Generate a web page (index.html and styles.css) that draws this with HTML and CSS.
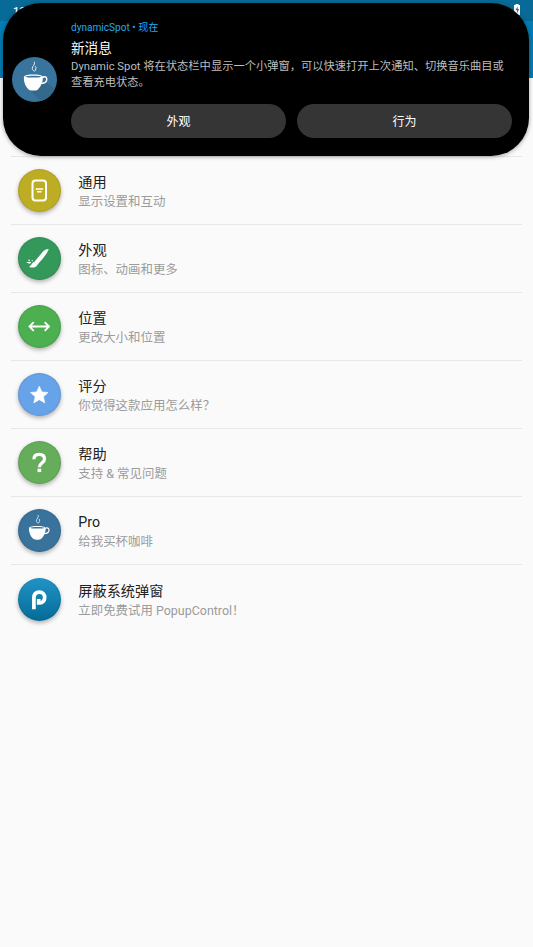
FILE: index.html
```html
<!DOCTYPE html>
<html lang="zh-CN">
<head>
<meta charset="utf-8">
<title>dynamicSpot</title>
<link rel="stylesheet" href="styles.css">
</head>
<body>
<svg class="defs" aria-hidden="true">
  <symbol id="cup" viewBox="0 0 44 44" preserveAspectRatio="none">
    <path fill="currentColor" fill-rule="evenodd" d="M10.700 19.200C11.500 17.500 16 17 21 17s9.700.6 10.300 2.100c2.300-1 5-.2 5.100 2.500.1 3-2.500 5-6.500 4.900-1.100 2.700-3.200 4.500-4.200 5.400-2.200 1.200-7.200 1.200-9.400 0-3.300-2.300-5.800-6.500-5.600-12.700zM12.200 19.300c1.200 1.100 16.200 1.100 17.600 0-1.300-1.300-16.300-1.300-17.600 0zM31.400 20.600c0 1.600-.3 3-.8 4.400 2.500.1 4.300-1.200 4.300-3.200 0-1.700-2-2.200-3.500-1.200z"/>
    <path fill="none" stroke="currentColor" stroke-width=".9" stroke-linecap="round" d="M22.200 5c1 2.800-2.200 3.900-2.400 6-.1 1.300 1 2 1.900 2.700M23.600 9.500c1 1.700-.1 2.800-.9 4.200"/>
  </symbol>
</svg>
<header class="appbar">
  <div class="statusbar">
    <span>10:00</span>
    <svg class="battery" viewBox="0 0 8 11"><path fill="#fff" d="M2.500 0h3v1H7v10H1V1h1.500z"/><path fill="#086a96" d="M4.700 2.500 2.600 6h1.500v3l2-3.700H4.700z"/></svg>
  </div>
</header>

<section class="popup">
  <svg class="avatar" viewBox="0 0 44 44">
    <circle cx="22" cy="22" r="22" fill="#38749b"/>
    <path fill="#34698c" d="M33 24 42 31.200A22 22 0 0 1 28.500 43L17 32z"/>
    <use href="#cup" x="2" y="0" width="39.500" height="44"/>
  </svg>
  <div class="message">
    <div class="source">dynamicSpot • 现在</div>
    <div class="heading">新消息</div>
    <div class="body">Dynamic Spot 将在状态栏中显示一个小弹窗，可以快速打开上次通知、切换音乐曲目或<br>查看充电状态。</div>
    <div class="actions"><div class="action">外观</div><div class="action">行为</div></div>
  </div>
</section>

<main class="list">
  <div class="row">
    <div class="icon general"><svg viewBox="0 0 43 43"><rect x="14.500" y="11.500" width="13.500" height="20" rx="3" fill="none" stroke="#fff" stroke-width="2"/><path stroke="#fff" stroke-width="1.500" d="M17.700 20h7.400M19 22.800h4.500"/></svg></div>
    <div class="text"><div class="title">通用</div><div class="sub">显示设置和互动</div></div>
  </div>
  <div class="row">
    <div class="icon looks"><svg viewBox="0 0 43 43"><path fill="#fff" d="M30.700 12.200c-1.600-.4-4.200.8-5.700 2.300L16 25.300l3.300 2.600c4-4.700 9.300-10 11.400-15.700z"/><path fill="#fff" d="m15.700 25 3.800 2.700c-1.200 2.300-2.800 2.800-5.600 2.800-1.700 0-2.700-.5-2.500-1.300 1.800-.1 2.200-2.900 4.300-4.200z"/><path fill="#fff" d="m8 25.300 3-.6 2.600.9-2 1.200zM10.200 22.500l1.500.2.300 1.300-1.500-.2zM13.300 23.500l1.700-.4-.6 1.500z"/></svg></div>
    <div class="text"><div class="title">外观</div><div class="sub">图标、动画和更多</div></div>
  </div>
  <div class="row">
    <div class="icon place"><svg viewBox="0 0 43 43"><path fill="none" stroke="#fff" stroke-width="1.900" d="M12 21.500h19M15.700 17.200l-4.200 4.300 4.200 4.300M26.700 17.200l4.200 4.300-4.200 4.300"/></svg></div>
    <div class="text"><div class="title">位置</div><div class="sub">更改大小和位置</div></div>
  </div>
  <div class="row">
    <div class="icon rating"><svg viewBox="0 0 43 43"><path fill="#fff" stroke="#fff" stroke-width=".6" stroke-linejoin="round" d="m21.300 13.200 2.600 5.700 6.200.6-4.700 4.200 1.400 6.200-5.500-3.200-5.500 3.200 1.400-6.200-4.700-4.200 6.200-.6z"/></svg></div>
    <div class="text"><div class="title">评分</div><div class="sub">你觉得这款应用怎么样？</div></div>
  </div>
  <div class="row">
    <div class="icon help"><svg viewBox="0 0 43 43"><path fill="none" stroke="#fff" stroke-width="3.200" d="M15.800 18.200c.1-3.100 2.200-4.900 5.400-4.900s5.300 1.700 5.300 4.600c0 4-5.200 4.300-5.200 8.300"/><path fill="#fff" d="M19.500 27.700h3.700v3.400h-3.700z"/></svg></div>
    <div class="text"><div class="title">帮助</div><div class="sub">支持 &amp; 常见问题</div></div>
  </div>
  <div class="row">
    <div class="icon pro"><svg viewBox="0 0 43 43"><use href="#cup" x="2.400" y="2" width="35.300" height="38.500"/></svg></div>
    <div class="text"><div class="title">Pro</div><div class="sub">给我买杯咖啡</div></div>
  </div>
  <div class="row">
    <div class="icon control"><svg viewBox="0 0 43 43"><path fill="none" stroke="#fff" stroke-width="3.700" d="M15.900 31.300V20.200c0-4 2.300-6 5.500-6 3.500 0 5.300 2.300 5.300 5.200 0 3.600-2.500 5.700-6 5.600v-4"/></svg></div>
    <div class="text"><div class="title">屏蔽系统弹窗</div><div class="sub">立即免费试用 PopupControl！</div></div>
  </div>
</main>
</body>
</html>
```
FILE: styles.css
```css
* { box-sizing: border-box; }
body {
  margin: 0;
  height: 947px;
  overflow: hidden;
  background: #fafafa;
  font-family: Roboto, "Noto Sans CJK SC", sans-serif;
}
.defs { position: absolute; width: 0; height: 0; }
.appbar { height: 78px; background: #047bb2; }
.statusbar {
  height: 21px;
  padding: 4px 12px 0 13px;
  display: flex;
  justify-content: space-between;
  background: #086a96;
  color: #fff;
  font-size: 11px;
  font-weight: 500;
  line-height: 15px;
}
.battery { width: 8px; height: 11px; }
.popup {
  position: absolute;
  left: 3.400px;
  top: 3.400px;
  width: 526px;
  height: 152.600px;
  padding: 17.600px 17.400px 0 8.600px;
  display: flex;
  border-radius: 38px;
  background: #000;
  color: #fff;
  box-shadow: 0 1px 4px rgba(0, 0, 0, .35);
}
.avatar { width: 45px; height: 45px; margin: 36px 14px 0 0; flex: none; }
.message { flex: 1; white-space: nowrap; }
.source { height: 19px; color: #20a9ea; font-size: 10.100px; line-height: 14px; }
.heading { height: 18px; font-size: 13.600px; line-height: 17px; }
.body { height: 45px; padding-top: .6px; color: #bebebe; font-size: 11.280px; line-height: 16.500px; }
.actions { display: flex; gap: 11px; height: 34.500px; margin-top: 1px; }
.action {
  flex: 1;
  display: flex;
  align-items: center;
  justify-content: center;
  padding-top: 1px;
  border-radius: 18px;
  background: #353535;
  font-size: 12px;
  line-height: 16px;
}
.list { margin: 78px 11px 0; }
.row {
  display: flex;
  align-items: center;
  height: 68.080px;
  padding-left: 6.500px;
  border-top: 1px solid #e7e7e7;
}
.icon {
  width: 43px;
  height: 43px;
  margin-right: 17.800px;
  border-radius: 50%;
  color: #fff;
  box-shadow: 0 2px 4px rgba(0, 0, 0, .3), inset 0 0 1px 1px rgba(0, 0, 0, .08);
}
.icon svg { display: block; width: 43px; height: 43px; }
.general { background: #bdad24; }
.looks { background: #33985a; }
.place { background: #4caf50; }
.rating { background: #67a3e9; }
.help { background: #65ad5b; }
.pro { background: #39729a; }
.control { background: linear-gradient(#2094c6, #056b98); }
.text { padding-top: 2px; white-space: nowrap; }
.title { height: 19px; color: #212121; font-size: 14.200px; line-height: 19px; }
.sub { height: 18px; color: #9b9b9b; font-size: 12.450px; line-height: 19px; }
```
